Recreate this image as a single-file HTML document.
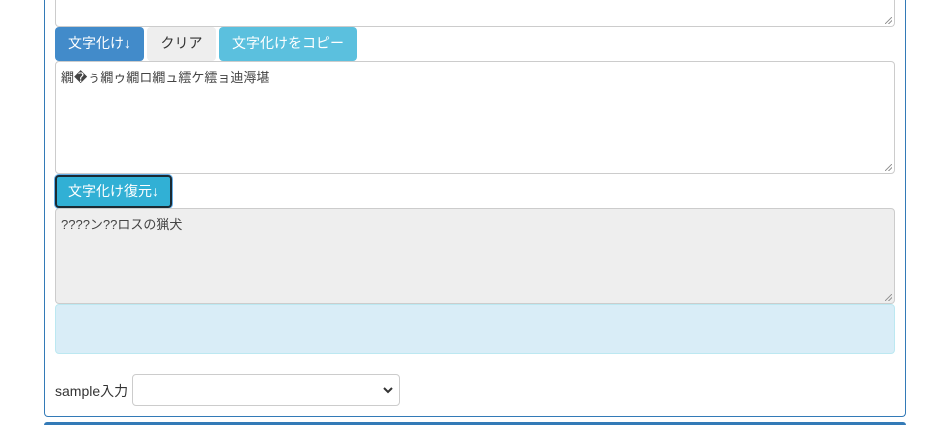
<!DOCTYPE html>
<html><head><meta charset="utf-8"><style>
html,body{margin:0;width:928px;height:425px;overflow:hidden}
body{background:#fff;font-family:"Liberation Sans","Noto Sans CJK JP",sans-serif;font-size:14px;color:#333;position:relative}
.abs{position:absolute;box-sizing:border-box}
.panel{left:44px;top:0;width:862px;height:417px;border:1px solid #337ab7;border-top:none;border-radius:0 0 4px 4px}
.panel2{left:44px;top:422px;width:862px;height:3px;background:#337ab7;border-radius:4px 4px 0 0}
.ta{border:1px solid #ccc;border-radius:4px;background:#fff;padding:5px 5px;font-size:13px;color:#444}
.btn{border-radius:4px;color:#fff;text-align:center;line-height:33px;font-size:14px}
.grip{position:absolute;right:2px;bottom:2px;width:7px;height:7px;background:linear-gradient(135deg,transparent 45%,#999 45%,#999 55%,transparent 55%,transparent 70%,#999 70%,#999 80%,transparent 80%)}
</style></head><body>
<div class="abs panel"></div>
<div class="abs panel2"></div>
<div class="abs ta" style="left:55px;top:0;width:840px;height:27px;border-top:none;border-radius:0 0 4px 4px"><div class="grip"></div></div>
<div class="abs btn" style="left:55px;top:27px;width:89px;height:34px;background:#428bca">文字化け↓</div>
<div class="abs btn" style="left:147px;top:27px;width:69px;height:34px;background:#eee;color:#333">クリア</div>
<div class="abs btn" style="left:219px;top:27px;width:138px;height:34px;background:#5bc0de">文字化けをコピー</div>
<div class="abs ta" style="left:55px;top:61px;width:840px;height:113px">繝�ぅ繝ゥ繝ロ繝ュ繧ケ繧ョ迪溽堪<div class="grip"></div></div>
<div class="abs btn" style="left:55px;top:175px;width:117px;height:33px;background:#31b0d5;border:2px solid #1a2a33;line-height:28px;box-shadow:0 0 0 1px #66afe9">文字化け復元↓</div>
<div class="abs ta" style="left:55px;top:208px;width:840px;height:96px;background:#eee">????ン??ロスの猟犬<div class="grip"></div></div>
<div class="abs" style="left:55px;top:304px;width:840px;height:50px;background:#d9edf7;border:1px solid #bce8f1;border-radius:4px"></div>
<div class="abs" style="left:55px;top:381px;font-size:14px">sample入力</div>
<div class="abs" style="left:132px;top:374px;width:268px;height:32px;border:1px solid #ccc;border-radius:4px">
<svg style="position:absolute;right:6px;top:11px" width="10" height="8" viewBox="0 0 10 8"><path d="M1 2l4 4 4-4" stroke="#333" stroke-width="2" fill="none"/></svg></div>
</body></html>
